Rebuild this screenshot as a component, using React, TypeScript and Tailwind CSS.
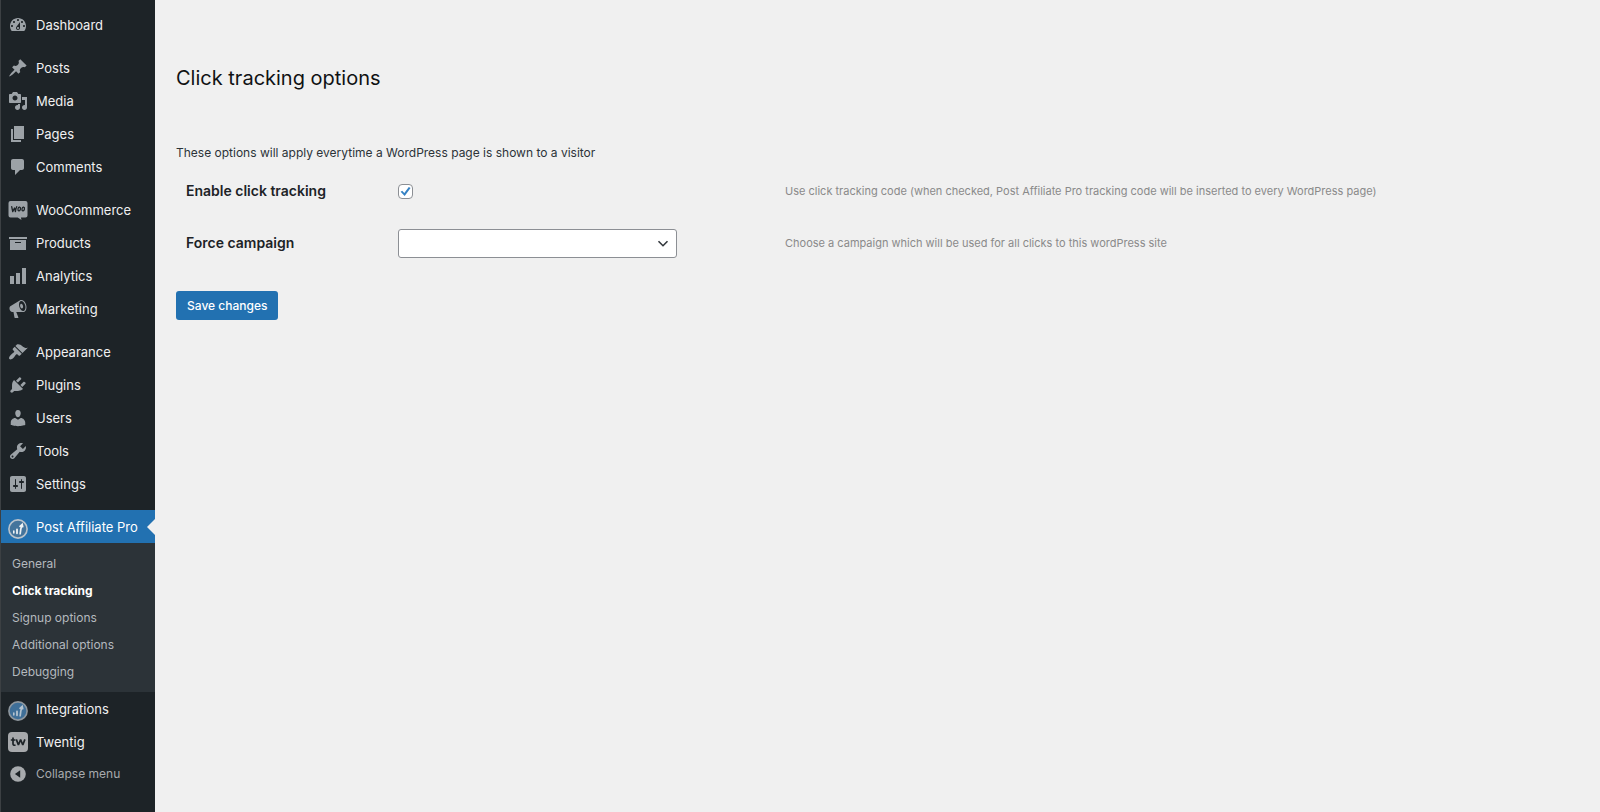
import React, { useState } from "react";

const ICONS = {
  dashboard:
    "M3.76 16h12.48c1.1-1.37 1.76-3.11 1.76-5 0-4.42-3.58-8-8-8s-8 3.58-8 8c0 1.89.66 3.63 1.76 5zM10 4c.55 0 1 .45 1 1s-.45 1-1 1-1-.45-1-1 .45-1 1-1zM6 6c.55 0 1 .45 1 1s-.45 1-1 1-1-.45-1-1 .45-1 1-1zm8 0c.55 0 1 .45 1 1s-.45 1-1 1-1-.45-1-1 .45-1 1-1zm-5.37 5.55L12 7v6c0 1.1-.9 2-2 2s-2-.9-2-2c0-.57.24-1.08.63-1.45zM4 10c.55 0 1 .45 1 1s-.45 1-1 1-1-.45-1-1 .45-1 1-1zm12 0c.55 0 1 .45 1 1s-.45 1-1 1-1-.45-1-1 .45-1 1-1zm-5 3c0-.55-.45-1-1-1s-1 .45-1 1 .45 1 1 1 1-.45 1-1z",
  posts:
    "M10.44 3.02l1.82-1.82 6.36 6.35-1.83 1.82c-1.05-.68-2.48-.57-3.41.36l-.75.75c-.92.93-1.04 2.35-.35 3.41l-1.83 1.82-2.41-2.41-2.8 2.79c-.42.42-3.38 2.71-3.8 2.29s1.86-3.39 2.28-3.81l2.79-2.79L4.1 9.36l1.83-1.82c1.05.69 2.48.57 3.4-.36l.75-.75c.93-.92 1.05-2.35.36-3.41z",
  media:
    "M13 11V4c0-.55-.45-1-1-1h-1.67L9 1H5L3.67 3H2c-.55 0-1 .45-1 1v7c0 .55.45 1 1 1h10c.55 0 1-.45 1-1zM7 4.5c1.38 0 2.5 1.12 2.5 2.5S8.38 9.5 7 9.5 4.5 8.38 4.5 7 5.62 4.5 7 4.5zM14 6h5v10.5c0 1.38-1.12 2.5-2.5 2.5S14 17.88 14 16.5s1.12-2.5 2.5-2.5c.17 0 .34.02.5.05V9h-3V6zm-4 8.05V13h2v3.5c0 1.38-1.12 2.5-2.5 2.5S7 17.88 7 16.5 8.12 14 9.5 14c.17 0 .34.02.5.05z",
  pages: "M6 15V2h10v13H6zm-1 1h8v2H3V5h2v11z",
  comments:
    "M5 2h9c1.1 0 2 .9 2 2v7c0 1.1-.9 2-2 2h-2l-5 5v-5H5c-1.1 0-2-.9-2-2V4c0-1.1.9-2 2-2z",
  products: "M19 4v2H1V4h18zM2 7h16v10H2V7zm11 3V9H7v1h6z",
  analytics: "M18 18V2h-4v16h4zm-6 0V7H8v11h4zm-6 0v-8H2v8h4z",
  marketing:
    "M18.15 5.94c.46 1.62.38 3.22-.02 4.48-.42 1.28-1.26 2.18-2.3 2.48-.16.06-.26.06-.4.06-.06.02-.12.02-.18.02-.06.02-.14.02-.22.02h-6.8l2.22 5.5c.02.14-.06.26-.14.34-.08.1-.24.16-.34.16H6.95c-.1 0-.26-.06-.34-.16-.08-.08-.16-.2-.14-.34l-1-5.5H4.25l-.02-.02c-.5.06-1.08-.18-1.54-.62s-.88-1.08-1.06-1.88c-.24-.8-.2-1.56-.02-2.2.18-.62.58-1.08 1.06-1.3l.02-.02 9-5.4c.1-.06.18-.1.24-.16.06-.04.14-.08.24-.12.16-.08.28-.12.5-.18 1.04-.3 2.24.1 3.22.98s1.84 2.24 2.26 3.86zm-2.58 5.98h-.02c.4-.1.74-.34 1.04-.7.58-.7.86-1.76.86-3.04 0-.64-.1-1.3-.28-1.98-.34-1.36-1.02-2.5-1.78-3.24s-1.68-1.1-2.46-.88c-.82.22-1.4.96-1.7 2-.32 1.04-.28 2.36.06 3.72.38 1.36 1 2.5 1.8 3.24.78.74 1.62 1.1 2.48.88zm-2.54-7.08c.22-.04.42-.02.62.04.38.16.76.48 1.02 1s.42 1.2.42 1.78c0 .3-.04.56-.12.8-.18.48-.44.84-.86.94-.34.1-.8-.06-1.14-.4s-.64-.86-.78-1.5c-.18-.62-.12-1.24.02-1.72s.48-.84.82-.94z",
  appearance:
    "M14.48 11.06L7.41 3.99l1.5-1.5c.5-.56 2.3-.47 3.51.32 1.21.8 1.43 1.28 2.91 2.1 1.18.64 2.45 1.26 4.45.85zm-.71.71L6.7 4.7 4.93 6.47c-.39.39-.39 1.02 0 1.41l1.06 1.06c.39.39.39 1.03 0 1.42-.6.6-1.43 1.11-2.21 1.69-.35.26-.7.53-1.01.84C1.43 14.23.4 16.08 1.4 17.07c.99 1 2.84-.03 4.18-1.36.31-.31.58-.66.85-1.02.57-.78 1.08-1.61 1.69-2.21.39-.39 1.02-.39 1.41 0l1.06 1.06c.39.39 1.02.39 1.41 0z",
  plugins:
    "M13.11 4.36L9.87 7.6 8 5.73l3.24-3.24c.35-.34 1.05-.2 1.56.32.52.51.66 1.21.31 1.55zm-8 1.77l.91-1.12 9.01 9.01-1.19.84c-.71.71-2.63 1.16-3.82 1.16H6.14L4.9 17.26c-.59.59-1.54.59-2.12 0-.59-.58-.59-1.53 0-2.12l1.24-1.24v-3.88c0-1.13.4-3.19 1.09-3.89zm7.26 3.97l3.24-3.24c.34-.35 1.04-.21 1.55.31.52.51.66 1.21.31 1.55l-3.24 3.25z",
  users:
    "M10 9.25c-2.27 0-2.73-3.44-2.73-3.44C7 4.02 7.82 2 9.97 2c2.16 0 2.98 2.02 2.71 3.81 0 0-.41 3.44-2.68 3.44zm0 2.57L12.72 10c2.39 0 4.52 2.33 4.52 4.53v2.49s-3.65 1.13-7.24 1.13c-3.65 0-7.24-1.13-7.24-1.13v-2.49c0-2.25 1.94-4.48 4.47-4.48z",
  tools:
    "M16.68 9.77c-1.34 1.34-3.3 1.67-4.95.99l-5.41 6.52c-.99.99-2.59.99-3.58 0s-.99-2.59 0-3.57l6.52-5.42c-.68-1.65-.35-3.61.99-4.95 1.28-1.28 3.12-1.62 4.72-1.06l-2.89 2.89 2.82 2.82 2.86-2.87c.53 1.58.18 3.39-1.08 4.65zM3.81 16.21c.4.39 1.04.39 1.43 0 .4-.4.4-1.04 0-1.43-.39-.4-1.03-.4-1.43 0-.39.39-.39 1.03 0 1.43z",
  settings:
    "M18 16V4c0-1.1-.9-2-2-2H4c-1.1 0-2 .9-2 2v12c0 1.1.9 2 2 2h12c1.1 0 2-.9 2-2zM8 11h1c.55 0 1 .45 1 1s-.45 1-1 1H8v1.5c0 .28-.22.5-.5.5s-.5-.22-.5-.5V13H6c-.55 0-1-.45-1-1s.45-1 1-1h1V5.5c0-.28.22-.5.5-.5s.5.22.5.5V11zm5-2h-1c-.55 0-1-.45-1-1s.45-1 1-1h1V5.5c0-.28.22-.5.5-.5s.5.22.5.5V7h1c.55 0 1 .45 1 1s-.45 1-1 1h-1v5.5c0 .28-.22.5-.5.5s-.5-.22-.5-.5V9z",
};

function Glyph({ name }: { name: keyof typeof ICONS }) {
  return (
    <svg viewBox="0 0 20 20" className="size-5 shrink-0 fill-[#9ca2a7]" fillRule="evenodd" aria-hidden="true">
      <path d={ICONS[name]} />
    </svg>
  );
}

function WooIcon() {
  return (
    <svg viewBox="0 0 20 20" className="size-5 shrink-0" aria-hidden="true">
      <path
        d="M2.500 1h15A2 2 0 0 1 19.500 3v12.500a2 2 0 0 1-2 2h-4.600l.6 2.500-3.800-2.500H2.500a2 2 0 0 1-2-2V3a2 2 0 0 1 2-2z"
        fill="#9ca2a7"
      />
      <g fill="none" stroke="#1d2327" strokeWidth="1.300" strokeLinecap="round" strokeLinejoin="round">
        <path d="M3.700 6.700l1 5 1.800-3.700.9 3.700c.2-2 .6-3.600 1.300-5" />
        <ellipse cx="11.200" cy="9" rx="1.200" ry="1.900" transform="rotate(14 11.200 9)" />
        <ellipse cx="15.200" cy="9" rx="1.200" ry="1.900" transform="rotate(14 15.200 9)" />
      </g>
    </svg>
  );
}

function AffiliateIcon({ active = false }: { active?: boolean }) {
  return (
    <svg viewBox="0 0 20 20" className="mt-1 size-5 shrink-0" aria-hidden="true">
      <circle
        cx="10"
        cy="10"
        r="9.100"
        fill={active ? "#44749c" : "#3f6f98"}
        stroke={active ? "#b9c3cc" : "#8f979e"}
        strokeWidth="1.600"
      />
      <g stroke={active ? "#eef2f5" : "#b4c3cf"} strokeLinecap="round" fill="none">
        <path d="M5.800 12v2" strokeWidth="1.600" />
        <path d="M9 10.500v3.800" strokeWidth="1.800" />
        <path d="M12.200 14.800c.2-3.200.7-6 1.900-9M12 7.300l2.200-1.900.5 2.200" strokeWidth="1.700" />
      </g>
    </svg>
  );
}

function TwentigIcon() {
  return (
    <svg viewBox="0 0 20 20" className="size-5 shrink-0" aria-hidden="true">
      <rect width="20" height="20" rx="4" fill="#a7a9ac" />
      <g fill="none" stroke="#1d2327" strokeWidth="1.700">
        <path d="M5 5.500v6.300c0 1.300.7 1.700 2.500 1.300M2.800 8h4.600" />
        <path d="M8.300 7.400l2.100 5.600 2.200-5.400 2.200 5.400 2.100-5.600" strokeLinejoin="bevel" />
      </g>
    </svg>
  );
}

function CollapseIcon() {
  return (
    <svg viewBox="0 0 20 20" className="size-5 shrink-0" aria-hidden="true">
      <circle cx="10" cy="10" r="7.800" fill="#a7aaad" />
      <path d="M12.200 6.200v7.600L6.900 10z" fill="#1d2327" />
    </svg>
  );
}

function MenuLink({ icon, label }: { icon: React.ReactNode; label: string }) {
  return (
    <li>
      <a href="#" className="flex h-[33px] items-center gap-2 pl-[7px] text-[#f0f0f1] hover:text-[#72aee6]">
        {icon}
        {label}
      </a>
    </li>
  );
}

const GROUPS: { label: string; icon: React.ReactNode }[][] = [
  [{ label: "Dashboard", icon: <Glyph name="dashboard" /> }],
  [
    { label: "Posts", icon: <Glyph name="posts" /> },
    { label: "Media", icon: <Glyph name="media" /> },
    { label: "Pages", icon: <Glyph name="pages" /> },
    { label: "Comments", icon: <Glyph name="comments" /> },
  ],
  [
    { label: "WooCommerce", icon: <WooIcon /> },
    { label: "Products", icon: <Glyph name="products" /> },
    { label: "Analytics", icon: <Glyph name="analytics" /> },
    { label: "Marketing", icon: <Glyph name="marketing" /> },
  ],
  [
    { label: "Appearance", icon: <Glyph name="appearance" /> },
    { label: "Plugins", icon: <Glyph name="plugins" /> },
    { label: "Users", icon: <Glyph name="users" /> },
    { label: "Tools", icon: <Glyph name="tools" /> },
    { label: "Settings", icon: <Glyph name="settings" /> },
  ],
];

const SUBMENU = ["General", "Click tracking", "Signup options", "Additional options", "Debugging"];

function Sidebar() {
  return (
    <nav
      aria-label="Main menu"
      className="flex w-[155px] shrink-0 flex-col gap-2.5 border-l border-[#3c4043] bg-[#1d2327] pt-2 text-[13px] leading-4"
    >
      {GROUPS.map((group) => (
        <ul key={group[0].label}>
          {group.map((item) => (
            <MenuLink key={item.label} {...item} />
          ))}
        </ul>
      ))}
      <ul>
        <li>
          <a
            href="#"
            aria-current="page"
            className="relative flex h-[33px] items-center gap-2 bg-[#2271b1] pl-[7px] text-white"
          >
            <AffiliateIcon active />
            Post Affiliate Pro
            <span className="absolute top-1/2 right-0 -translate-y-1/2 border-y-8 border-r-8 border-y-transparent border-r-[#f0f0f0]" />
          </a>
          <ul className="bg-[#2c3338] py-[7px] text-xs">
            {SUBMENU.map((label) => (
              <li key={label}>
                <a
                  href="#"
                  className={
                    label === "Click tracking"
                      ? "flex h-[27px] items-center pl-[11px] font-bold text-white"
                      : "flex h-[27px] items-center pl-[11px] text-[#b4b9be] hover:text-[#72aee6]"
                  }
                >
                  {label}
                </a>
              </li>
            ))}
          </ul>
        </li>
        <MenuLink label="Integrations" icon={<AffiliateIcon />} />
        <MenuLink label="Twentig" icon={<TwentigIcon />} />
        <li>
          <button type="button" className="flex h-8 w-full items-center gap-2 pl-[7px] text-xs text-[#a7aaad]">
            <CollapseIcon />
            Collapse menu
          </button>
        </li>
      </ul>
    </nav>
  );
}

export default function App() {
  const [enabled, setEnabled] = useState(true);
  return (
    <div className="flex min-h-screen bg-[#f0f0f0] font-['Inter','Liberation_Sans',sans-serif] text-[#2c3338]">
      <Sidebar />
      <main className="min-w-0 flex-1 px-[21px] pt-16">
        <h1 className="text-xl leading-7 text-[#101214]">Click tracking options</h1>
        <form onSubmit={(e) => e.preventDefault()}>
          <p className="mt-[51px] text-xs leading-5">
            These options will apply everytime a WordPress page is shown to a visitor
          </p>
          <div className="mt-0.5 grid grid-cols-[212px_minmax(279px,387px)_1fr] pl-2.5">
            <label htmlFor="enable-tracking" className="flex h-[52px] items-center text-sm font-semibold text-[#1d2327]">
              Enable click tracking
            </label>
            <div className="flex items-center">
              <span className="relative flex">
                <input
                  id="enable-tracking"
                  type="checkbox"
                  checked={enabled}
                  onChange={(e) => setEnabled(e.target.checked)}
                  className="size-[15px] appearance-none rounded-[4px] border border-[#8c8f94] bg-white"
                />
                {enabled && (
                  <svg viewBox="0 0 16 16" className="pointer-events-none absolute inset-0 size-[15px]" aria-hidden="true">
                    <path d="M2.800 8.300l1.700-1.200 2.200 2.400 4.800-6.400 1.900 1.200-6.300 8.600z" fill="#3582c4" />
                  </svg>
                )}
              </span>
            </div>
            <p className="flex items-center text-[11px] text-[#8a8a8a]">
              Use click tracking code (when checked, Post Affiliate Pro tracking code will be inserted to every WordPress page)
            </p>
            <label htmlFor="campaign" className="flex h-[52px] items-center text-sm font-semibold text-[#1d2327]">
              Force campaign
            </label>
            <div className="flex items-center">
              <span className="relative flex">
                <select
                  id="campaign"
                  className="h-[29px] w-[279px] appearance-none rounded-[3px] border border-[#8c8f94] bg-white px-2 text-xs"
                >
                  <option value=""></option>
                </select>
                <svg viewBox="0 0 12 8" className="pointer-events-none absolute top-[11px] right-2 h-2 w-3" aria-hidden="true">
                  <path d="M1.500 1.200L6 5.700l4.500-4.500" fill="none" stroke="#32373c" strokeWidth="1.600" />
                </svg>
              </span>
            </div>
            <p className="flex items-center text-[11px] text-[#8a8a8a]">
              Choose a campaign which will be used for all clicks to this wordPress site
            </p>
          </div>
          <button
            type="submit"
            className="mt-[22px] h-[29px] rounded-[3px] bg-[#2271b1] px-[11px] text-xs font-medium text-white"
          >
            Save changes
          </button>
        </form>
      </main>
    </div>
  );
}
